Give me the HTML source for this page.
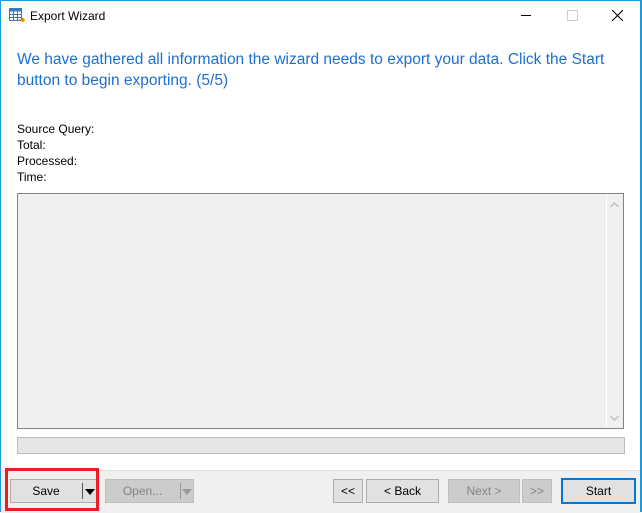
<!DOCTYPE html><html><head><style>
body{margin:0;width:642px;height:512px;overflow:hidden;font-family:"Liberation Sans",sans-serif;background:#fff;position:relative}
.a{position:absolute}
.btn{position:absolute;top:479px;height:22px;border:1px solid #adadad;background:#e1e1e1;font-size:12px;line-height:22px;text-align:center;color:#000;box-sizing:content-box}
.dis{background:#ccc;border-color:#bfbfbf;color:#838383}
.lbl{font-size:12px;color:#000;left:17px}
</style></head><body>
<div class="a" style="left:0;top:0;width:1px;height:512px;background:#1e9ae0"></div>
<div class="a" style="left:640px;top:0;width:2px;height:512px;background:#1e9ae0"></div>
<div class="a" style="left:0;top:0;width:642px;height:1px;background:#1e9ae0"></div>
<svg class="a" style="left:9px;top:8px" width="16" height="16"><rect x="0.5" y="0.5" width="12" height="12" fill="#fff" stroke="#3b78c0"/><rect x="0.5" y="0.5" width="12" height="3" fill="#3b78c0"/><path d="M4.5 3v10M8.5 3v10M1 6.5h11M1 9.5h11" stroke="#3b78c0"/><path d="M10 12h5M13 10l2 2-2 2" stroke="#f08a00" stroke-width="1.6" fill="none"/></svg>
<div class="a" style="left:30px;top:9px;font-size:12px">Export Wizard</div>
<div class="a" style="left:521px;top:15px;width:10px;height:1px;background:#000"></div>
<div class="a" style="left:567px;top:10px;width:9px;height:9px;border:1px solid #ccc"></div>
<svg class="a" style="left:612px;top:10px" width="11" height="11"><path d="M0 0L11 11M11 0L0 11" stroke="#000" stroke-width="1.1"/></svg>
<div class="a" style="left:17px;top:49px;font-size:15.5px;color:#1c6fd0;line-height:21px;width:610px">We have gathered all information the wizard needs to export your data. Click the Start button to begin exporting. (5/5)</div>
<div class="a lbl" style="top:122px">Source Query:</div>
<div class="a lbl" style="top:138px">Total:</div>
<div class="a lbl" style="top:154px">Processed:</div>
<div class="a lbl" style="top:170px">Time:</div>
<div class="a" style="left:17px;top:193px;width:605px;height:234px;border:1px solid #828282;background:#f0f0f0"></div>
<div class="a" style="left:606px;top:194px;width:1px;height:234px;background:#fff"></div>
<svg class="a" style="left:610px;top:202px" width="9" height="6"><path d="M0.5 5L4.5 1 8.5 5" stroke="#c0c0c0" stroke-width="1.5" fill="none"/></svg>
<svg class="a" style="left:610px;top:415px" width="9" height="6"><path d="M0.5 1L4.5 5 8.5 1" stroke="#c0c0c0" stroke-width="1.5" fill="none"/></svg>
<div class="a" style="left:17px;top:437px;width:606px;height:15px;border:1px solid #bcbcbc;background:#e6e6e6"></div>
<div class="a" style="left:1px;top:470px;width:639px;height:42px;background:#f0f0f0;border-top:1px solid #dfdfdf"></div>
<div class="btn" style="left:10px;width:86px"><span style="position:absolute;left:0;width:70px">Save</span><span style="position:absolute;left:71px;top:3px;width:1px;height:16px;background:#555"></span><span style="position:absolute;left:74px;top:9px;border-left:5px solid transparent;border-right:5px solid transparent;border-top:6px solid #000"></span></div>
<div class="btn dis" style="left:105px;width:87px"><span style="position:absolute;left:0;width:73px">Open...</span><span style="position:absolute;left:74px;top:3px;width:1px;height:16px;background:#999"></span><span style="position:absolute;left:76px;top:9px;border-left:5px solid transparent;border-right:5px solid transparent;border-top:6px solid #999"></span></div>
<div class="btn" style="left:333px;width:28px">&lt;&lt;</div>
<div class="btn" style="left:366px;width:71px">&lt; Back</div>
<div class="btn dis" style="left:448px;width:70px">Next &gt;</div>
<div class="btn dis" style="left:522px;width:28px">&gt;&gt;</div>
<div class="btn" style="left:561px;width:71px;border:2px solid #0078d7;top:478px;height:22px">Start</div>
<div class="a" style="left:5px;top:468px;width:88px;height:37px;border:3px solid #ea1c24"></div>
</body></html>
